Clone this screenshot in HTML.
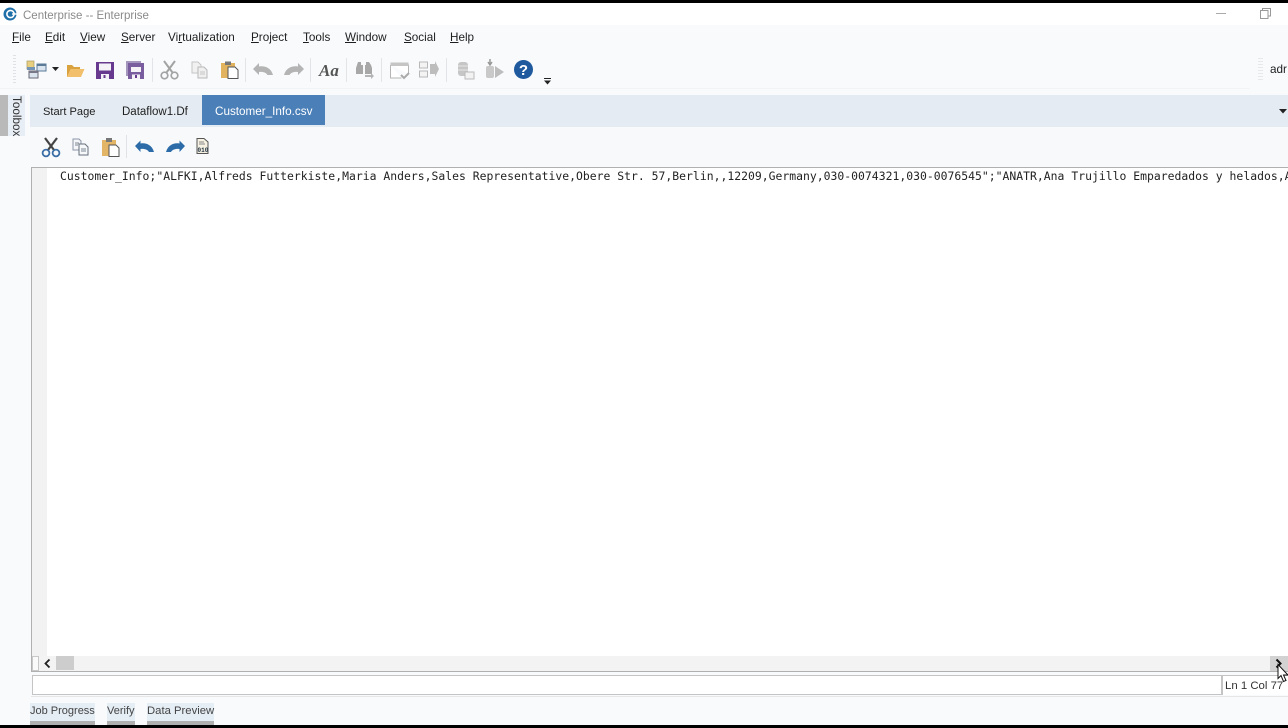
<!DOCTYPE html>
<html><head><meta charset="utf-8">
<style>
html,body{margin:0;padding:0;width:1288px;height:728px;overflow:hidden;background:#f8fafc}
*{box-sizing:border-box}
.a{position:absolute}
.t{position:absolute;font-family:"Liberation Sans",sans-serif;font-size:11.7px;color:#1e1e1e;white-space:nowrap;line-height:16px}
.m u{text-underline-offset:1px}
svg{position:absolute;overflow:visible}
</style></head><body>
<div class="a" style="left:0;top:0;width:1288px;height:3px;background:#000"></div>
<div class="a" style="left:0;top:3px;width:1288px;height:22px;background:#fff"></div>
<div class="a" style="left:0;top:25px;width:1288px;height:70px;background:#f8fafc"></div>
<!-- logo -->
<svg style="left:3px;top:7px" width="14" height="14" viewBox="0 0 14 14"><circle cx="7" cy="7" r="6.5" fill="#1f6fa8"/><circle cx="7.5" cy="7" r="3.6" fill="none" stroke="#fff" stroke-width="1.6"/><rect x="9" y="6.3" width="5" height="1.4" fill="#fff"/></svg>
<div class="t" style="left:23px;top:8px;color:#8a8a8a;font-size:11.5px">Centerprise -- Enterprise</div>
<!-- window controls -->
<div class="a" style="left:1216px;top:13px;width:10px;height:1px;background:#aaa"></div>
<svg style="left:1260px;top:8px" width="11" height="11" viewBox="0 0 11 11"><path d="M.5 2.5h7.5v8H.5zM2.5 2.5V.5h8v7.500H8" fill="none" stroke="#999"/></svg>
<!-- menu -->
<div class="t m" style="left:12px;top:30px"><u>F</u>ile</div>
<div class="t m" style="left:45px;top:30px"><u>E</u>dit</div>
<div class="t m" style="left:80px;top:30px"><u>V</u>iew</div>
<div class="t m" style="left:121px;top:30px"><u>S</u>erver</div>
<div class="t m" style="left:168px;top:30px">Vi<u>r</u>tualization</div>
<div class="t m" style="left:251px;top:30px"><u>P</u>roject</div>
<div class="t m" style="left:303px;top:30px"><u>T</u>ools</div>
<div class="t m" style="left:345px;top:30px"><u>W</u>indow</div>
<div class="t m" style="left:404px;top:30px"><u>S</u>ocial</div>
<div class="t m" style="left:450px;top:30px"><u>H</u>elp</div>
<!-- main toolbar -->
<div class="a" style="left:13px;top:55px;width:3px;height:30px;background:repeating-linear-gradient(#dfe1e4 0 1px,transparent 1px 3px)"></div>
<div class="a" style="left:0;top:88px;width:1250px;height:1px;background:#f1f3f5"></div>
<svg style="left:26px;top:60px" width="24" height="20" viewBox="0 0 24 20"><rect x="1" y="1" width="7" height="8" fill="#e8cf80" stroke="#a89860" stroke-width=".7"/><rect x="11" y="4" width="9" height="7" fill="#d9e4ee" stroke="#5a7a98"/><rect x="11" y="4" width="9" height="2" fill="#5a7a98"/><rect x="3" y="11" width="9" height="7" fill="#d9e4ee" stroke="#667"/><rect x="3" y="11" width="9" height="2" fill="#778"/><path d="M1 7h8v3H1z" fill="#7394b4"/></svg>
<svg style="left:52px;top:67px" width="7" height="4"><path d="M0 0h7L3.500 4z" fill="#222"/></svg>
<svg style="left:66px;top:62px" width="19" height="16" viewBox="0 0 19 16"><path d="M1 15V3h5l2 2h6v3H5z" fill="#d9a23f"/><path d="M1 15L4.500 7H18.500L15 15z" fill="#f2bf6b"/></svg>
<svg style="left:96px;top:61px" width="18" height="18" viewBox="0 0 18 18"><path d="M0 1h18v17H0z" fill="#67398f"/><path d="M3 2.500h12v7H3z" fill="#f4f2f7"/><path d="M5 13h8v5H5z" fill="#f4f2f7"/><path d="M7.500 14h2v3h-2z" fill="#67398f"/></svg>
<svg style="left:125px;top:60px" width="20" height="20" viewBox="0 0 20 20"><path d="M1 1h15v3H4v12H1z" fill="#a596bd"/><path d="M3 3h16v16H3z" fill="#7a5d9f"/><path d="M6 7h10v5H6z" fill="#f4f2f7"/><path d="M7 14.500h8V19H7z" fill="#f4f2f7"/><path d="M10 15h2v3h-2z" fill="#67398f"/></svg>
<div class="a" style="left:152px;top:58px;width:1px;height:24px;background:#e2e4e7"></div>
<svg style="left:160px;top:60px" width="19" height="20" viewBox="0 0 19 20" fill="none" stroke="#a3a3a3"><path d="M4 1l8.500 11.500M15 1L6.500 12.500" stroke-width="2"/><circle cx="4.500" cy="15.500" r="3.300" stroke-width="1.700"/><circle cx="14.500" cy="15.500" r="3.300" stroke-width="1.700"/></svg>
<svg style="left:191px;top:61px" width="17" height="18" viewBox="0 0 17 18"><path d="M1 1h6l3 3v8H1z" fill="#f1f1f1" stroke="#c5c5c5"/><path d="M7 6h6l3 3v8H7z" fill="#efefef" stroke="#b8b8b8"/><path d="M9 11h5M9 13h5" stroke="#c5c5c5"/></svg>
<svg style="left:220px;top:60px" width="19" height="19" viewBox="0 0 19 19"><path d="M1 3h14v15H1z" fill="#e2b35e"/><path d="M5 1.500h6V5H5z" fill="#777"/><path d="M8 7h7l3 3v8.500H8z" fill="#fff" stroke="#555"/></svg>
<div class="a" style="left:245px;top:58px;width:1px;height:24px;background:#e2e4e7"></div>
<svg style="left:253px;top:63px" width="20" height="13" viewBox="0 0 20 13"><path d="M0 6l6-6v3.500C12 2.500 18 5 20 12h-5.500C13 9.500 10 8.500 6 9v3z" fill="#b4b4b4"/></svg>
<svg style="left:284px;top:63px" width="20" height="13" viewBox="0 0 20 13"><path d="M20 6l-6-6v3.500C8 2.500 2 5 0 12h5.500C7 9.500 10 8.500 14 9v3z" fill="#b4b4b4"/></svg>
<div class="a" style="left:310px;top:58px;width:1px;height:24px;background:#e2e4e7"></div>
<div class="a" style="left:319px;top:61px;font:italic bold 17px 'Liberation Serif',serif;color:#555;line-height:20px">Aa</div>
<div class="a" style="left:346px;top:58px;width:1px;height:24px;background:#e2e4e7"></div>
<svg style="left:356px;top:62px" width="18" height="17" viewBox="0 0 18 17"><path d="M2 0h3v3h2v9H0V6zM10 0h3l2 3 1 3v6H9V3h1z" fill="#a8a8a8"/><path d="M9 13h6v-2l3 3-3 3v-2H9z" fill="#b5b5b5"/></svg>
<div class="a" style="left:381px;top:58px;width:1px;height:24px;background:#e2e4e7"></div>
<svg style="left:390px;top:62px" width="19" height="17" viewBox="0 0 19 17"><path d="M.5 3h18v9M.5 3v13h11" fill="#fff" stroke="#b5b5b5"/><path d="M.5.500h18V4H.5z" fill="#c5c5c5"/><path d="M11 13l3 3 5-5" fill="none" stroke="#aaa" stroke-width="2"/></svg>
<svg style="left:419px;top:61px" width="20" height="17" viewBox="0 0 20 17"><rect x=".5" y="1" width="8" height="6" fill="#f3f3f3" stroke="#b8b8b8"/><rect x=".5" y="10" width="8" height="6" fill="#f3f3f3" stroke="#b8b8b8"/><path d="M11 3h5V0l4 8-4 8v-3h-5z" fill="#bdbdbd"/></svg>
<div class="a" style="left:446px;top:58px;width:1px;height:24px;background:#e2e4e7"></div>
<svg style="left:457px;top:61px" width="18" height="19" viewBox="0 0 18 19"><rect x="1" y="1" width="10" height="14" rx="3" fill="#c6c6c6"/><path d="M1 5h10M1 9h10" stroke="#e5e5e5"/><rect x="8" y="11" width="9" height="7" fill="#f2f2f2" stroke="#bbb"/></svg>
<svg style="left:485px;top:59px" width="19" height="20" viewBox="0 0 19 20"><rect x="1" y="7" width="8" height="12" rx="2" fill="#c9c9c9"/><path d="M10 7l9 6-9 6z" fill="#bdbdbd"/><path d="M5 0v5M3 3l2 3 2-3" stroke="#999" fill="none" stroke-width="1.500"/></svg>
<svg style="left:514px;top:60px" width="19" height="19" viewBox="0 0 19 19"><circle cx="9.500" cy="9.500" r="9.500" fill="#1f5a9e"/><text x="9.500" y="15" font-family="Liberation Sans,sans-serif" font-weight="bold" font-size="15" fill="#fff" text-anchor="middle">?</text></svg>
<svg style="left:544px;top:78px" width="7" height="7"><path d="M0 0h7v1H0zM0 2.500h7L3.500 6.500z" fill="#222"/></svg>
<div class="a" style="left:1258px;top:58px;width:5px;height:22px;background:repeating-linear-gradient(#e6e8ea 0 1px,transparent 1px 3px)"></div>
<div class="t" style="left:1270px;top:62px">adr</div>
<!-- tab bar -->
<div class="a" style="left:30px;top:95px;width:1258px;height:32px;background:#e4ebf2"></div>
<div class="t" style="left:43px;top:104px;font-size:11.1px">Start Page</div>
<div class="t" style="left:122px;top:104px;font-size:11.5px">Dataflow1.Df</div>
<div class="a" style="left:202px;top:95px;width:123px;height:30px;background:#4a7fb8"></div>
<div class="t" style="left:215px;top:104px;color:#fff">Customer_Info.csv</div>
<svg style="left:1279px;top:109px" width="8" height="5"><path d="M0 0h8L4 4.500z" fill="#222"/></svg>
<!-- toolbox -->
<div class="a" style="left:0;top:95px;width:8px;height:41px;background:#b9b9b9"></div>
<div class="a" style="left:8px;top:95px;width:17px;height:41px;background:#e8eef5"></div>
<div class="t" style="left:9px;top:96px;font-size:11.7px;writing-mode:vertical-rl;color:#333;line-height:15px;height:41px">Toolbox</div>
<!-- editor toolbar -->
<div class="a" style="left:30px;top:127px;width:1258px;height:40px;background:#f8f9fb"></div>
<svg style="left:41px;top:137px" width="20" height="21" viewBox="0 0 20 21" fill="none"><path d="M4 1l9 12M16 1L7 13" stroke="#444" stroke-width="2.200"/><circle cx="5" cy="16" r="3.400" stroke="#3a6ea5" stroke-width="1.800"/><circle cx="15" cy="16" r="3.400" stroke="#3a6ea5" stroke-width="1.800"/></svg>
<svg style="left:72px;top:138px" width="18" height="18" viewBox="0 0 18 18"><path d="M1 1h6l2 2v9H1z" fill="#f4f6f9" stroke="#8b98a8"/><path d="M7 6h6l3 3v8H7z" fill="#f7f8fa" stroke="#66707c"/><path d="M9 11h5M9 13h5M3 5h4M3 7h3" stroke="#7e8894"/></svg>
<svg style="left:101px;top:137px" width="19" height="20" viewBox="0 0 19 20"><path d="M1 3h14v16H1z" fill="#e3b567"/><path d="M5 1h6v4H5z" fill="#777"/><path d="M8 8h7l3 3v8.500H8z" fill="#fff" stroke="#555"/></svg>
<div class="a" style="left:126px;top:135px;width:1px;height:23px;background:#e0e2e5"></div>
<svg style="left:135px;top:140px" width="19" height="12" viewBox="0 0 19 12"><path d="M0 6l5.500-5.500V3.500C11 2.500 17 5 19 12h-5C12.500 9.500 9.500 8.500 5.500 9v3z" fill="#2b6ca8"/></svg>
<svg style="left:166px;top:140px" width="19" height="12" viewBox="0 0 19 12"><path d="M19 6L13.500.5V3.500C8 2.500 2 5 0 12h5C6.500 9.500 9.500 8.500 13.500 9v3z" fill="#2b6ca8"/></svg>
<svg style="left:196px;top:138px" width="13" height="16" viewBox="0 0 13 16"><path d="M1 .5h7l4 3.500v11.500H1z" fill="#f6f1e2" stroke="#555"/><path d="M3 4h5M3 6h6" stroke="#888"/><text x="1.500" y="14" font-family="Liberation Mono,monospace" font-size="6" font-weight="bold" fill="#234">010</text></svg>
<!-- editor -->
<div class="a" style="left:31px;top:167px;width:1257px;height:505px;background:#fff;border:1px solid #b0b0b0;border-width:1px 0 1px 1px"></div>
<div class="a" style="left:32px;top:168px;width:15px;height:488px;background:#f2f2f2"></div>
<div class="a" style="left:60px;top:169px;width:1228px;overflow:hidden;font-family:'DejaVu Sans Mono',monospace;font-size:11.4px;letter-spacing:.022px;line-height:15px;color:#222;white-space:pre">Customer_Info;"ALFKI,Alfreds Futterkiste,Maria Anders,Sales Representative,Obere Str. 57,Berlin,,12209,Germany,030-0074321,030-0076545";"ANATR,Ana Trujillo Emparedados y helados,Ana</div>
<!-- hscroll -->
<div class="a" style="left:32px;top:656px;width:1256px;height:15px;background:#f3f3f3"></div>
<div class="a" style="left:32px;top:656px;width:7px;height:15px;background:#fafafa;border:1px solid #c8c8c8"></div>
<div class="a" style="left:56px;top:656px;width:18px;height:14px;background:#cdcdcd"></div>
<svg style="left:44px;top:659px" width="7" height="9"><path d="M5.500 .5L1.500 4.500l4 4" fill="none" stroke="#222" stroke-width="1.800"/></svg>
<div class="a" style="left:1270px;top:656px;width:18px;height:15px;background:#d2d2d2"></div>
<svg style="left:1275px;top:659px" width="7" height="9"><path d="M1.500 .5l4 4-4 4" fill="none" stroke="#111" stroke-width="2"/></svg>
<!-- status -->
<div class="a" style="left:32px;top:675px;width:1190px;height:20px;background:#fff;border:1px solid #c4c4c4"></div>
<div class="a" style="left:1222px;top:675px;width:66px;height:20px;background:#fff;border-left:1px solid #c4c4c4;border-top:1px solid #c4c4c4"></div>
<div class="t" style="left:1225px;top:678px;font-size:11.4px;color:#333">Ln 1 Col 77</div>
<div class="a" style="left:31px;top:696px;width:1257px;height:1px;background:#e6e6e6"></div>
<!-- cursor -->
<svg style="left:1277px;top:664px" width="11" height="19" viewBox="0 0 11 19"><path d="M1 .5v14l3-3 2.500 6 2.500-1-2.500-5.500H11z" fill="#fff" stroke="#111"/></svg>
<!-- bottom tabs -->
<div class="a" style="left:30px;top:703px;width:65px;height:18px;background:#e5edf5"></div>
<div class="a" style="left:30px;top:721px;width:65px;height:4px;background:#b0b0b0"></div>
<div class="a" style="left:107px;top:703px;width:28px;height:18px;background:#e5edf5"></div>
<div class="a" style="left:107px;top:721px;width:28px;height:4px;background:#b0b0b0"></div>
<div class="a" style="left:147px;top:703px;width:67px;height:18px;background:#e5edf5"></div>
<div class="a" style="left:147px;top:721px;width:67px;height:4px;background:#b0b0b0"></div>
<div class="t" style="left:30px;top:703px;font-size:11px;color:#444">Job Progress</div>
<div class="t" style="left:107px;top:703px;font-size:11px;color:#444">Verify</div>
<div class="t" style="left:147px;top:703px;font-size:11.3px;color:#444">Data Preview</div>
<div class="a" style="left:0;top:725px;width:1288px;height:3px;background:#000"></div>
</body></html>
